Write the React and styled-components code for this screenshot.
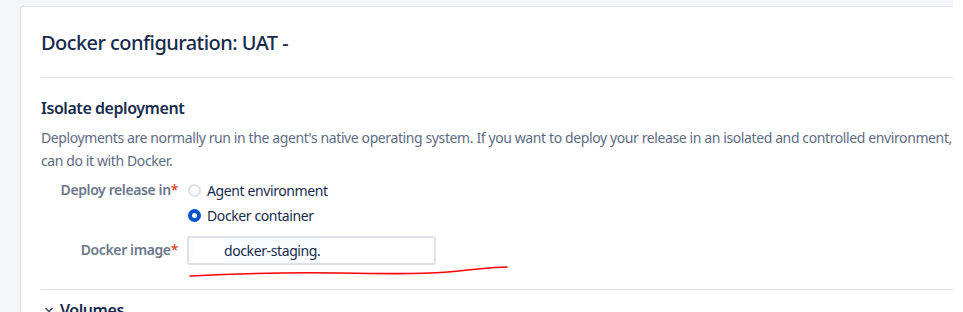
import styled, { createGlobalStyle } from "styled-components";

const GlobalStyle = createGlobalStyle`
  html, body {
    margin: 0;
    background: #ffffff;
  }
  body {
    font-family: "Noto Sans", "Open Sans", sans-serif;
    color: #172b4d;
  }
`;

const Canvas = styled.div`
  width: 953px;
  height: 312px;
  background: #f4f5f7;
  padding: 6px 0 0 20px;
  box-sizing: border-box;
  overflow: hidden;
`;

const Panel = styled.section`
  width: 1000px;
  min-height: 400px;
  background: #ffffff;
  border: 1px solid #dfe1e6;
  border-radius: 3px;
  padding: 0 20px;
  box-sizing: border-box;
`;

const Title = styled.h2`
  margin: 0;
  padding: 24px 0 22px;
  font-size: 20px;
  line-height: 24px;
  font-weight: 500;
  letter-spacing: -0.028em;
  color: #172b4d;
  border-bottom: 1px solid #dfe1e6;
`;

const Section = styled.div`
  padding-top: 18px;
  border-bottom: 1px solid #dfe1e6;
  padding-bottom: 24px;
`;

const Heading = styled.h3`
  margin: 0;
  font-size: 16px;
  line-height: 24px;
  font-weight: 600;
  letter-spacing: -0.028em;
  color: #172b4d;
`;

const Description = styled.p`
  margin: 6px 0 0;
  font-size: 14px;
  line-height: 23px;
  letter-spacing: -0.028em;
  color: #5e6c84;
  white-space: nowrap;
`;

const Form = styled.div`
  margin-top: 6px;
  display: grid;
  grid-template-columns: 137px 1fr;
  column-gap: 9px;
  row-gap: 9px;
  align-items: start;
`;

const Label = styled.div`
  text-align: right;
  font-size: 14px;
  line-height: 24px;
  font-weight: 600;
  letter-spacing: -0.028em;
  color: #6b778c;
  padding-top: ${(p) => p.$offset || 0}px;
`;

const Required = styled.span`
  color: #de350b;
  font-weight: 400;
`;

const RadioGroup = styled.div`
  display: flex;
  flex-direction: column;
  gap: 1px;
`;

const RadioRow = styled.label`
  display: flex;
  align-items: center;
  gap: 6px;
  height: 24px;
  font-size: 14px;
  letter-spacing: -0.028em;
  color: #172b4d;
`;

const RadioDot = styled.span`
  width: 13px;
  height: 13px;
  border-radius: 50%;
  box-sizing: border-box;
  margin-left: 1px;
  border: ${(p) => (p.$checked ? "4px solid #0052cc" : "2px solid #dfe1e6")};
  background: ${(p) => (p.$checked ? "#ffffff" : "#fafbfc")};
`;

const FieldWrap = styled.div`
  position: relative;
  width: 249px;
`;

const Field = styled.div`
  height: 29px;
  border: 2px solid #dfe1e6;
  border-radius: 3px;
  background: #fafbfc;
  box-sizing: border-box;
  display: flex;
  align-items: center;
  padding: 0 2px 0 4px;
  font-size: 14px;
  letter-spacing: -0.028em;
  color: #172b4d;
  overflow: hidden;
`;

const Mask = styled.span`
  align-self: stretch;
  background: #ffffff;
  width: ${(p) => (p.$grow ? "auto" : `${p.$w}px`)};
  flex: ${(p) => (p.$grow ? 1 : "none")};
`;

const Scribble = styled.svg`
  position: absolute;
  left: 2px;
  top: 29px;
  overflow: visible;
`;

const Collapse = styled.div`
  display: flex;
  align-items: center;
  gap: 6px;
  padding: 8px 0 0 3px;
  font-size: 16px;
  line-height: 24px;
  font-weight: 600;
  letter-spacing: -0.028em;
  color: #172b4d;
`;

export default function App() {
  return (
    <>
      <GlobalStyle />
      <Canvas>
        <Panel>
          <Title>Docker configuration: UAT -</Title>
          <Section>
            <Heading>Isolate deployment</Heading>
            <Description>
              Deployments are normally run in the agent's native operating system. If you want to deploy
              your release in an isolated and controlled environment, you
              <br />
              can do it with Docker.
            </Description>
            <Form>
              <Label>
                Deploy release in<Required>*</Required>
              </Label>
              <RadioGroup>
                <RadioRow>
                  <RadioDot />
                  Agent environment
                </RadioRow>
                <RadioRow>
                  <RadioDot $checked />
                  Docker container
                </RadioRow>
              </RadioGroup>
              <Label $offset={2}>
                Docker image<Required>*</Required>
              </Label>
              <FieldWrap>
                <Field>
                  <Mask $w={31} />
                  docker-staging.
                  <Mask $grow />
                </Field>
                <Scribble width="320" height="14" viewBox="0 0 320 14">
                  <path
                    d="M1 11 C 40 9, 90 7, 150 8 S 240 9, 270 6 S 305 2, 318 2"
                    fill="none"
                    stroke="#ff0000"
                    strokeWidth="1.6"
                    strokeLinecap="round"
                  />
                </Scribble>
              </FieldWrap>
            </Form>
          </Section>
          <Collapse>
            <svg width="10" height="10" viewBox="0 0 10 10">
              <path d="M1.5 3 L5 6.5 L8.5 3" fill="none" stroke="#42526e" strokeWidth="1.6" />
            </svg>
            Volumes
          </Collapse>
        </Panel>
      </Canvas>
    </>
  );
}
